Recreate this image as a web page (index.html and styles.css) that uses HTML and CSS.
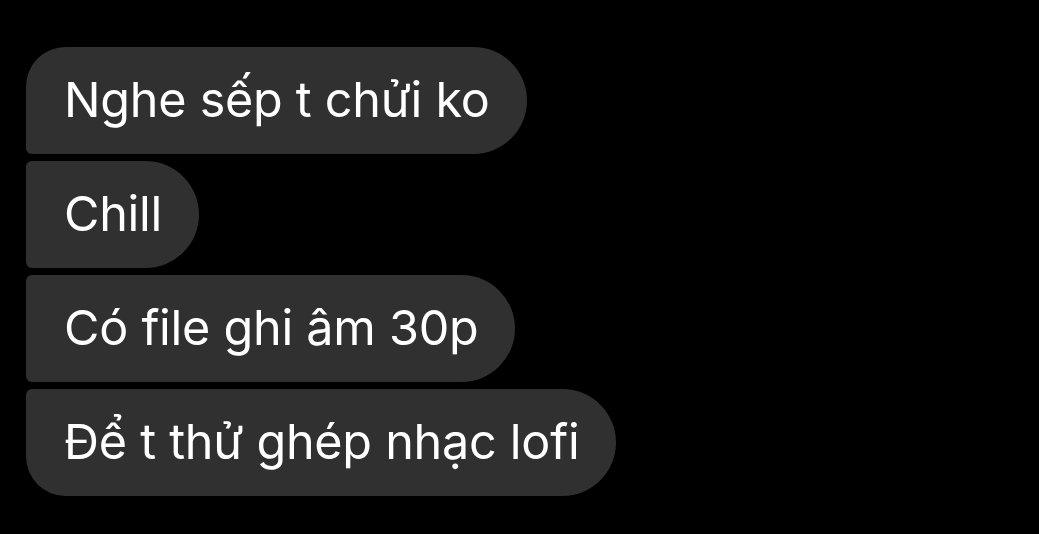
FILE: index.html
```html
<!DOCTYPE html>
<html lang="vi">
<head>
<meta charset="utf-8">
<link rel="stylesheet" href="styles.css">
</head>
<body>
<div class="thread">
  <div class="bubble first">Nghe sếp t chửi ko</div>
  <div class="bubble mid">Chill</div>
  <div class="bubble mid">Có file ghi âm 30p</div>
  <div class="bubble last">Để t thử ghép nhạc lofi</div>
</div>
</body>
</html>
```

FILE: styles.css
```css
html, body {
  margin: 0;
  padding: 0;
  background: #000;
  width: 1039px;
  height: 534px;
  overflow: hidden;
}
.thread {
  display: flex;
  flex-direction: column;
  align-items: flex-start;
  gap: 7px;
  padding: 47px 0 0 26px;
}
.bubble {
  display: flex;
  align-items: center;
  height: 107px;
  box-sizing: border-box;
  padding: 0 37px 2px 38px;
  background: #303030;
  color: #fff;
  font-family: Inter, "Noto Sans", sans-serif;
  font-size: 48.5px;
  letter-spacing: -0.25px;
  white-space: nowrap;
  border-radius: 54px;
}
.first { border-radius: 40px 54px 54px 6px; }
.mid { border-radius: 6px 54px 54px 6px; }
.last { border-radius: 6px 54px 54px 40px; }
```
